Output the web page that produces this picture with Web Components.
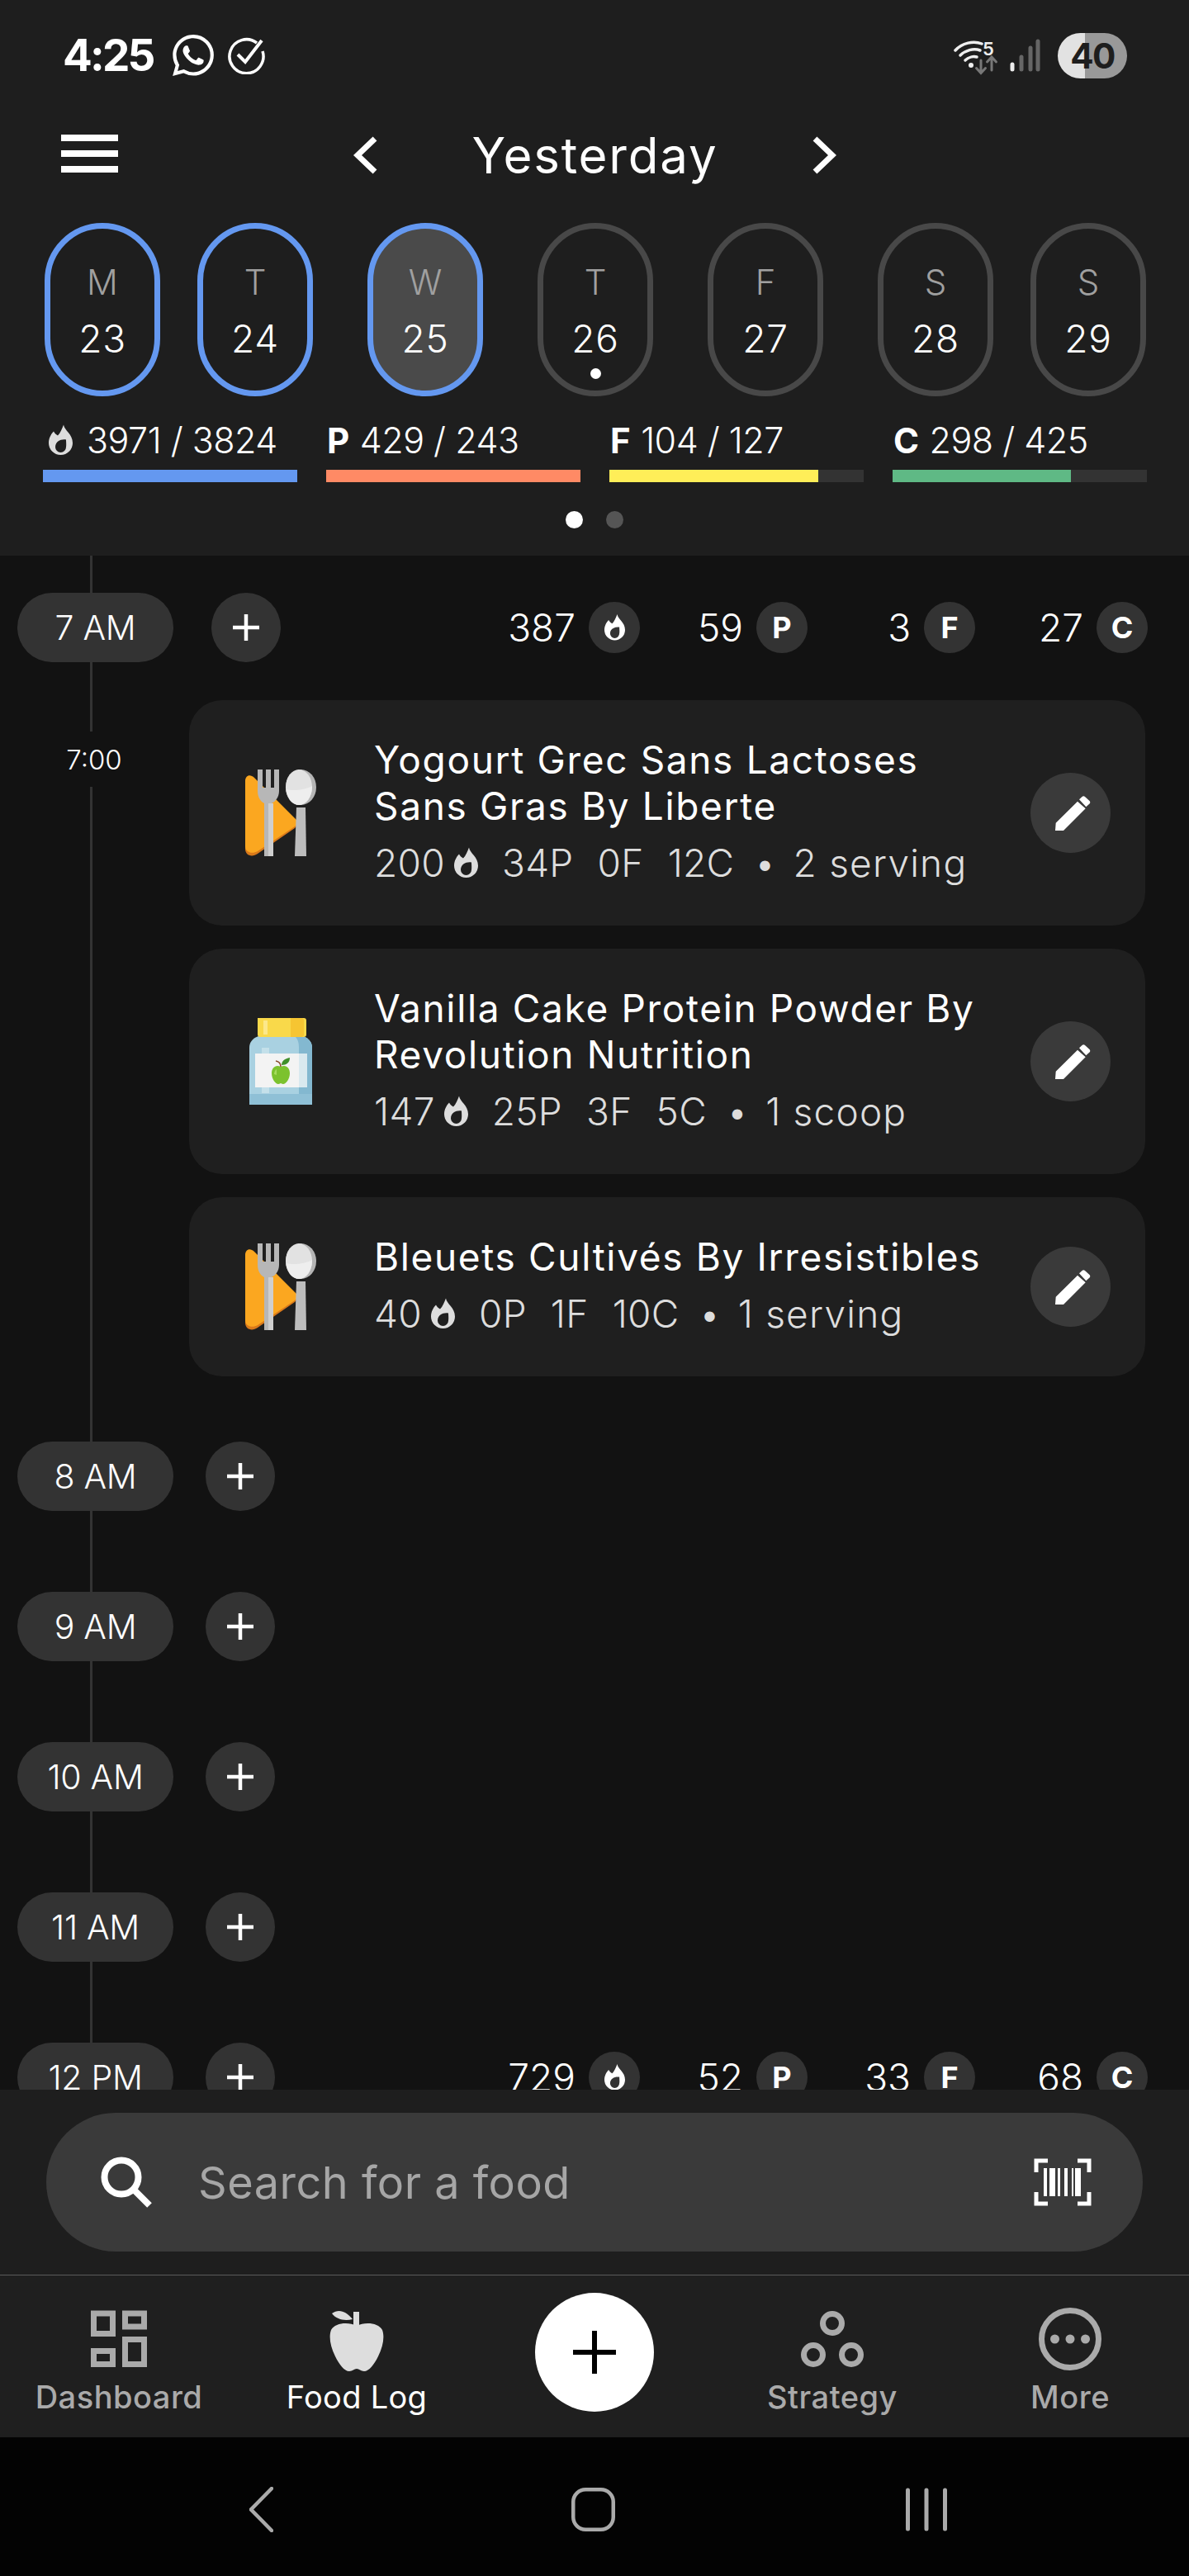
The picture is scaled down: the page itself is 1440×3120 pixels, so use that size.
<!DOCTYPE html>
<html>
<head>
<meta charset="utf-8">
<title>Food Log</title>
<style>
  html, body { margin: 0; background: #000; }
  body { font-family: Inter, "Liberation Sans", sans-serif; color: #fff; width: 1440px; height: 3120px; overflow: hidden; }
  #app { display: flex; flex-direction: column; height: 3120px; }
</style>
</head>
<body>
<div id="app">
  <app-header>
    <status-bar></status-bar>
    <date-nav title="Yesterday"></date-nav>
    <week-strip>
      <day-pill letter="M" day="23" logged></day-pill>
      <day-pill letter="T" day="24" logged></day-pill>
      <day-pill letter="W" day="25" logged selected spaced></day-pill>
      <day-pill letter="T" day="26" today spaced></day-pill>
      <day-pill letter="F" day="27" spaced></day-pill>
      <day-pill letter="S" day="28" spaced></day-pill>
      <day-pill letter="S" day="29"></day-pill>
    </week-strip>
    <macro-summary>
      <macro-bar kind="flame" text="3971 / 3824" color="#6498f0" fill="100"></macro-bar>
      <macro-bar kind="P" text="429 / 243" color="#ff8a65" fill="100"></macro-bar>
      <macro-bar kind="F" text="104 / 127" color="#ffee58" fill="82"></macro-bar>
      <macro-bar kind="C" text="298 / 425" color="#5fb985" fill="70"></macro-bar>
    </macro-summary>
    <page-dots></page-dots>
  </app-header>

  <food-timeline>
    <hour-row label="7 AM" cal="387" p="59" f="3" c="27" first></hour-row>
    <food-entry time="7:00" icon="cutlery" cal="200" p="34" f="0" c="12" serving="2 serving">Yogourt Grec Sans Lactoses<br>Sans Gras By Liberte</food-entry>
    <food-entry icon="bottle" cal="147" p="25" f="3" c="5" serving="1 scoop">Vanilla Cake Protein Powder By<br>Revolution Nutrition</food-entry>
    <food-entry icon="cutlery" cal="40" p="0" f="1" c="10" serving="1 serving">Bleuets Cultivés By Irresistibles</food-entry>
    <hour-row label="8 AM" after-food></hour-row>
    <hour-row label="9 AM"></hour-row>
    <hour-row label="10 AM"></hour-row>
    <hour-row label="11 AM"></hour-row>
    <hour-row label="12 PM" cal="729" p="52" f="33" c="68"></hour-row>
  </food-timeline>

  <search-panel placeholder="Search for a food"></search-panel>

  <bottom-nav>
    <nav-item label="Dashboard" icon="dashboard"></nav-item>
    <nav-item label="Food Log" icon="apple" active></nav-item>
    <add-button></add-button>
    <nav-item label="Strategy" icon="strategy"></nav-item>
    <nav-item label="More" icon="more"></nav-item>
  </bottom-nav>

  <system-bar></system-bar>
</div>

<script>
  const FLAME = `<path fill-rule="evenodd" d="M18 0C19 7 29 11 29 22A14.500 14.500 0 0 1 0 22C0 16 3 11 6 8C7 10 9 12 11 13C14 10 16 5 18 0ZM21 18C15 17 8 20 8 27A6.500 6.500 0 0 0 21 27C21.500 24 21 21 21 18Z"/>`;

  class FlameIcon extends HTMLElement {
    connectedCallback() {
      const w = this.getAttribute("width") || 29;
      const h = this.getAttribute("height") || 38;
      this.attachShadow({ mode: "open" }).innerHTML = `
        <style>:host { display: inline-flex; flex: none; } svg { display: block; fill: currentColor; }</style>
        <svg width="${w}" height="${h}" viewBox="0 0 29 37">${FLAME}</svg>`;
    }
  }

  class AppHeader extends HTMLElement {
    constructor() {
      super();
      this.attachShadow({ mode: "open" }).innerHTML = `
        <style>:host { display: flex; flex-direction: column; flex: none; height: 673px; box-sizing: border-box; background: #1e1e1e; }</style>
        <slot></slot>`;
    }
  }

  class StatusBar extends HTMLElement {
    constructor() {
      super();
      this.attachShadow({ mode: "open" }).innerHTML = `
        <style>
          :host { display: flex; align-items: center; height: 134px; padding: 0 75px 0 76px; box-sizing: border-box; }
          .time { font-size: 53px; font-weight: 700; letter-spacing: -2.800px; width: 133px; }
          svg { display: block; }
          .check { margin-left: 16px; }
          .right { margin-left: auto; display: flex; align-items: center; }
          .bat { margin-left: 21px; width: 84px; height: 55px; border-radius: 28px; color: #1e1e1e;
            background: linear-gradient(90deg, #e2e2e2 0 33px, #999 33px); font-size: 42px; font-weight: 700;
            display: flex; align-items: center; justify-content: center; letter-spacing: -1.500px; }
          .five { font-size: 22px; font-weight: 600; fill: #eee; font-family: Inter, sans-serif; }
        </style>
        <span class="time">4:25</span>
        <svg width="50" height="50" viewBox="0 0 24 24" fill="#fff"><path d="M17.472 14.382c-.297-.149-1.758-.867-2.03-.967-.273-.099-.471-.148-.67.15-.197.297-.767.966-.94 1.164-.173.199-.347.223-.644.075-.297-.15-1.255-.463-2.39-1.475-.883-.788-1.48-1.761-1.653-2.059-.173-.297-.018-.458.13-.606.134-.133.298-.347.446-.52.149-.174.198-.298.298-.497.099-.198.05-.371-.025-.52-.075-.149-.669-1.612-.916-2.207-.242-.579-.487-.5-.669-.51-.173-.008-.371-.01-.57-.01-.198 0-.52.074-.792.372-.272.297-1.04 1.016-1.04 2.479 0 1.462 1.065 2.875 1.213 3.074.149.198 2.096 3.2 5.077 4.487.709.306 1.262.489 1.694.625.712.227 1.36.195 1.871.118.571-.085 1.758-.719 2.006-1.413.248-.694.248-1.289.173-1.413-.074-.124-.272-.198-.57-.347m-5.421 7.403h-.004a9.87 9.87 0 01-5.031-1.378l-.361-.214-3.741.982.998-3.648-.235-.374a9.86 9.86 0 01-1.51-5.26c.001-5.45 4.436-9.884 9.888-9.884 2.64 0 5.122 1.03 6.988 2.898a9.825 9.825 0 012.893 6.994c-.003 5.45-4.437 9.884-9.885 9.884m8.413-18.297A11.815 11.815 0 0012.05 0C5.495 0 .16 5.335.157 11.892c0 2.096.547 4.142 1.588 5.945L.057 24l6.305-1.654a11.882 11.882 0 005.683 1.448h.005c6.554 0 11.89-5.335 11.893-11.893a11.821 11.821 0 00-3.48-8.413z"/></svg>
        <svg class="check" width="46" height="46" viewBox="0 0 46 46" fill="none" stroke="#fff" stroke-width="3.500">
          <path d="M36 8A20.500 20.500 0 1 0 43 18"/>
          <path d="M13 22l9 9L42 5" stroke-width="4"/>
        </svg>
        <div class="right">
          <svg width="54" height="48" viewBox="0 0 54 48" fill="none" stroke-linecap="round">
            <path d="M2 18C10 9 24 6 34 10" stroke="#eee" stroke-width="3.500"/>
            <path d="M8 24C14 18 24 15 32 18" stroke="#eee" stroke-width="3.500"/>
            <path d="M14 30C18 26 24 25 28 26" stroke="#eee" stroke-width="3.500"/>
            <circle cx="21" cy="36" r="3" fill="#eee"/>
            <text class="five" x="35" y="24">5</text>
            <path d="M33 30v15M27.500 39.500l5.500 6 5.500-6" stroke="#777" stroke-width="3"/>
            <path d="M46 42V27M40.500 32l5.500-6 5.500 6" stroke="#777" stroke-width="3"/>
          </svg>
          <svg style="margin-left:14px" width="37" height="40" viewBox="0 0 37 40" stroke-linecap="round" stroke-width="5">
            <path d="M3 37v-6" stroke="#eee"/><path d="M14 37V22" stroke="#666"/><path d="M25 37V11" stroke="#666"/><path d="M34 37V3" stroke="#666"/>
          </svg>
          <div class="bat">40</div>
        </div>`;
    }
  }

  class DateNav extends HTMLElement {
    connectedCallback() {
      this.attachShadow({ mode: "open" }).innerHTML = `
        <style>
          :host { display: flex; align-items: center; height: 108px; padding-left: 74px; }
          svg { display: block; flex: none; }
          .burger { width: 69px; height: 46px; margin-right: 285px; margin-top: -4px;
            display: flex; flex-direction: column; justify-content: space-between; }
          .burger i { display: block; height: 8px; background: #fff; }
          .title { width: 527px; text-align: center; font-size: 60px; line-height: 70px; letter-spacing: 1.800px; }
        </style>
        <div class="burger"><i></i><i></i><i></i></div>
        <svg width="29" height="46" viewBox="0 0 29 46" fill="none" stroke="#fff" stroke-width="7"><path d="M26 3L5 23l21 20"/></svg>
        <span class="title">${this.getAttribute("title")}</span>
        <svg width="29" height="46" viewBox="0 0 29 46" fill="none" stroke="#fff" stroke-width="7"><path d="M3 3l21 20L3 43"/></svg>`;
    }
  }

  class WeekStrip extends HTMLElement {
    constructor() {
      super();
      this.attachShadow({ mode: "open" }).innerHTML = `
        <style>:host { display: flex; gap: 45px; margin-top: 28px; padding-left: 54px; }</style>
        <slot></slot>`;
    }
  }

  class DayPill extends HTMLElement {
    connectedCallback() {
      const logged = this.hasAttribute("logged");
      const selected = this.hasAttribute("selected");
      this.attachShadow({ mode: "open" }).innerHTML = `
        <style>
          :host { display: block; flex: none; margin-left: ${this.hasAttribute("spaced") ? 21 : 0}px; }
          .pill { position: relative; width: 140px; height: 210px; box-sizing: border-box; border-radius: 70px;
            border: 7px solid ${logged ? "#6498f0" : "#484848"}; background: ${selected ? "#4a4a4a" : "transparent"};
            display: flex; flex-direction: column; align-items: center; padding-top: 40px; }
          .letter { font-size: 42px; line-height: 50px; color: #a0a0a0; font-weight: 300; }
          .day { font-size: 46px; line-height: 56px; margin-top: 15px; letter-spacing: .8px; font-weight: 300; }
          .dot { position: absolute; left: 50%; bottom: 14px; width: 13px; height: 13px; margin-left: -6.500px; border-radius: 50%; background: #fff; }
        </style>
        <div class="pill">
          <span class="letter">${this.getAttribute("letter")}</span>
          <span class="day">${this.getAttribute("day")}</span>
          ${this.hasAttribute("today") ? '<span class="dot"></span>' : ""}
        </div>`;
    }
  }

  class MacroSummary extends HTMLElement {
    constructor() {
      super();
      this.attachShadow({ mode: "open" }).innerHTML = `
        <style>:host { display: grid; grid-template-columns: repeat(4, 308px); column-gap: 35px; margin-top: 25px; padding-left: 52px; }</style>
        <slot></slot>`;
    }
  }

  class MacroBar extends HTMLElement {
    connectedCallback() {
      const kind = this.getAttribute("kind");
      const head = kind === "flame"
        ? '<flame-icon style="color:#ddd"></flame-icon>'
        : `<b>${kind}</b>`;
      this.attachShadow({ mode: "open" }).innerHTML = `
        <style>
          :host { display: block; }
          .label { display: flex; align-items: center; gap: ${kind === "flame" ? 17 : 13}px; height: 56px; padding-left: ${kind === "flame" ? 7 : 1}px;
            font-size: 43px; letter-spacing: -.5px; font-weight: 300; white-space: nowrap; }
          b { font-weight: 700; font-size: 42px; }
          .track { height: 15px; margin-top: 8px; background: #333; }
          .fill { height: 100%; }
        </style>
        <div class="label">${head}<span>${this.getAttribute("text")}</span></div>
        <div class="track"><div class="fill" style="width:${this.getAttribute("fill")}%;background:${this.getAttribute("color")}"></div></div>`;
    }
  }

  class PageDots extends HTMLElement {
    constructor() {
      super();
      this.attachShadow({ mode: "open" }).innerHTML = `
        <style>
          :host { display: flex; justify-content: center; gap: 28px; margin-top: 35px; }
          i { display: block; width: 21px; height: 21px; border-radius: 50%; background: #555; }
          i:first-of-type { background: #fff; }
        </style>
        <i></i><i></i>`;
    }
  }

  class FoodTimeline extends HTMLElement {
    constructor() {
      super();
      this.attachShadow({ mode: "open" }).innerHTML = `
        <style>
          :host { display: flex; flex-direction: column; flex: 1; min-height: 0; overflow: hidden; box-sizing: border-box; padding-top: 45px;
            background: linear-gradient(#333, #333) 108.500px 0 / 3px 100% no-repeat #121212; }
        </style>
        <slot></slot>`;
    }
  }

  class HourRow extends HTMLElement {
    connectedCallback() {
      const first = this.hasAttribute("first");
      const groups = this.hasAttribute("cal") ? [
        [this.getAttribute("cal"), "<flame-icon width='25' height='32'></flame-icon>"],
        [this.getAttribute("p"), "P"],
        [this.getAttribute("f"), "F"],
        [this.getAttribute("c"), "C"],
      ].map(([val, mark]) => `<div class="group"><span>${val}</span><span class="badge">${mark}</span></div>`).join("") : "";
      this.attachShadow({ mode: "open" }).innerHTML = `
        <style>
          :host { display: flex; flex: none; align-items: center; height: 84px; padding: 0 50px 0 21px;
            margin-top: ${this.hasAttribute("after-food") ? 79 : first ? 0 : 98}px; margin-bottom: ${first ? 46 : 0}px; }
          .pill { width: 189px; height: 84px; border-radius: 42px; background: #333; display: flex; align-items: center; justify-content: center;
            font-size: 41px; font-weight: 300; letter-spacing: -.3px; }
          .add { width: 84px; height: 84px; border-radius: 50%; background: #333; margin-left: ${first ? 46 : 39}px; display: flex; align-items: center; justify-content: center; }
          svg { display: block; }
          .macros { margin-left: auto; display: flex; }
          .group { width: 203px; display: flex; align-items: center; justify-content: flex-end; gap: 16px; font-size: 46px; font-weight: 300; }
          .group:last-child { width: 209px; }
          .badge { width: 62px; height: 62px; border-radius: 50%; background: #333; display: flex; align-items: center; justify-content: center;
            font-size: 36px; font-weight: 700; }
        </style>
        <span class="pill">${this.getAttribute("label")}</span>
        <span class="add"><svg width="32" height="32" viewBox="0 0 32 32" stroke="#fff" stroke-width="4.500"><path d="M16 0v32M0 16h32"/></svg></span>
        <div class="macros">${groups}</div>`;
    }
  }

  const FOOD_ICONS = {
    cutlery: `<svg width="86" height="105" viewBox="0 0 86 105">
        <path d="M0 16C0 8 6 6 11 11L61 61C64 64 64 68 60 71L15 102C8 107 0 104 0 96Z" fill="#d9791a"/>
        <path d="M0 14C0 7 6 5 11 10L61 60C64 63 64 66 60 69L15 99C8 103 0 100 0 93Z" fill="#fba720"/>
        <path d="M15 0h6v22h4V0h6v22h4V0h6v26c0 8-5 13-9 15v64H23V41c-4-2-8-7-8-15z" fill="#b7b7b7"/>
        <path d="M28 41h6v64h-6z" fill="#cfcfcf"/>
        <path d="M62 46h11l1 59H60z" fill="#bdbdbd"/>
        <ellipse cx="67.500" cy="21.500" rx="18.500" ry="21.500" fill="#b5b5b5"/>
        <ellipse cx="65" cy="21.500" rx="16" ry="21.500" fill="#e2e2e2"/>
        <path d="M50 24c8 2 22 1 31-4 0 13-7 23-16 23-8 0-14-8-15-19z" fill="#eee"/>
      </svg>`,
    bottle: `<svg width="76" height="105" viewBox="0 0 76 105">
        <path d="M11 22h54c8 3 11 8 11 14v69H0V36c0-6 3-11 11-14z" fill="#a9d1e1"/>
        <path d="M55 22h10c8 3 11 8 11 14v69H60V36c0-6-1-10-5-14z" fill="#83b8d0"/>
        <path d="M0 92h76v13H0z" fill="#8fc0d6"/>
        <path d="M15 36h9v55h-9z" fill="#c4e0ea"/>
        <path d="M7 43h63v41H7z" fill="#f3f3f3"/>
        <path d="M60 43h10v41H60z" fill="#d9e9ef"/>
        <path d="M10 0h56a3 3 0 0 1 3 3v17a3 3 0 0 1-3 3H13a3 3 0 0 1-3-3z" fill="#f9d94a"/>
        <path d="M50 0h13a3 3 0 0 1 3 3v17a3 3 0 0 1-3 3H50z" fill="#f6c532"/>
        <path d="M17 3h5v17h-5z" fill="#fce88a"/>
        <path d="M38 59c-6-3-11 1-11 8 0 7 5 13 8 13 2 0 2-1 3-1s1 1 3 1c3 0 8-6 8-13 0-7-5-11-11-8z" fill="#7cc22e"/>
        <path d="M33 62c-2 1-3 4-3 6l3 1z" fill="#a7dc5e"/>
        <path d="M38 59c0-3-1-6-6-7" fill="none" stroke="#8a4a2a" stroke-width="1.500"/>
        <path d="M39 57c0-5 4-8 10-9 0 6-4 9-10 9z" fill="#3f8f2a"/>
      </svg>`,
  };

  class FoodEntry extends HTMLElement {
    connectedCallback() {
      const a = (n) => this.getAttribute(n);
      const time = a("time");
      this.attachShadow({ mode: "open" }).innerHTML = `
        <style>
          :host { display: grid; flex: none; grid-template-columns: 229px 1158px; margin-bottom: 28px; }
          :host(:last-of-type) { margin-bottom: 0; }
          .time { grid-column: 1; justify-self: start; align-self: start; width: 78px; height: 67px; margin: 38px 0 0 75px; background: #121212;
            display: flex; align-items: center; justify-content: center; font-size: 33px; font-weight: 300; }
          .card { grid-column: 2; display: flex; align-items: center; padding: 44px 42px 48px 68px; background: #1f1f1f; border-radius: 40px; }
          .icon { width: 86px; display: flex; justify-content: center; flex: none; margin: 4px 70px 0 0; }
          svg { display: block; }
          .body { flex: 1; min-width: 0; }
          .title { font-size: 46px; line-height: 56px; font-weight: 400; letter-spacing: 1.650px; white-space: nowrap; }
          .meta { display: flex; align-items: center; gap: 29px; margin-top: 13px; height: 56px; color: #ddd; font-size: 46px; font-weight: 300; letter-spacing: .3px; white-space: nowrap; }
          .cal { display: flex; align-items: center; gap: 11px; }
          .sep { margin: 0 -8px 0 -5px; }
          .serving { letter-spacing: 1.200px; }
          .edit { width: 97px; height: 97px; margin-top: 4px; border-radius: 50%; background: #3a3a3a; flex: none; display: flex; align-items: center; justify-content: center; }
        </style>
        ${time ? `<span class="time">${time}</span>` : ""}
        <div class="card">
          <div class="icon">${FOOD_ICONS[a("icon")]}</div>
          <div class="body">
            <div class="title"><slot></slot></div>
            <div class="meta">
              <span class="cal">${a("cal")}<flame-icon></flame-icon></span>
              <span>${a("p")}P</span><span>${a("f")}F</span><span>${a("c")}C</span>
              <span class="sep">•</span><span class="serving">${a("serving")}</span>
            </div>
          </div>
          <span class="edit"><svg width="70" height="70" viewBox="0 0 70 70" fill="#fff"><path d="M16 56L16.700 46.700 43 20.700 52.700 29.300 26 56zM45 18.300L48.500 15C49.500 14 51 14 52 15L57.500 20C58.500 21 58.500 22.500 57.500 23.500L53.300 27.300z"/></svg></span>
        </div>`;
    }
  }

  class SearchPanel extends HTMLElement {
    connectedCallback() {
      this.attachShadow({ mode: "open" }).innerHTML = `
        <style>
          :host { display: block; flex: none; height: 225px; box-sizing: border-box; padding: 28px 56px 0; background: #1e1e1e; border-bottom: 1px solid #5a5a5a; }
          .box { height: 168px; border-radius: 84px; background: #3a3a3a; display: flex; align-items: center; padding: 0 62px 0 66px; }
          svg { display: block; flex: none; }
          .ph { margin-left: 56px; font-size: 54px; color: #a6a6a6; letter-spacing: .5px; font-weight: 400; }
          .scan { margin-left: auto; }
        </style>
        <div class="box">
          <svg width="62" height="62" viewBox="0 0 62 62" fill="none" stroke="#fff"><circle cx="25" cy="25" r="20.500" stroke-width="8"/><path d="M39 39l20 20" stroke-width="8"/></svg>
          <span class="ph">${this.getAttribute("placeholder")}</span>
          <svg class="scan" width="70" height="58" viewBox="0 0 70 58" fill="none" stroke="#fff" stroke-width="5">
            <path d="M17 3H3v14M53 3h14v14M17 55H3V41M53 55h14V41"/>
            <g stroke="none" fill="#fff"><path d="M12 12h4v34h-4zM19 12h7v34h-7zM29 12h3v34h-3zM37 12h4v34h-4zM46 12h2v34h-2zM50 12h7v34h-7z"/></g>
          </svg>
        </div>`;
    }
  }

  class BottomNav extends HTMLElement {
    constructor() {
      super();
      this.attachShadow({ mode: "open" }).innerHTML = `
        <style>:host { display: grid; flex: none; grid-template-columns: repeat(5, 288px); height: 196px; background: #1f1f1f; }</style>
        <slot></slot>`;
    }
  }

  const NAV_ICONS = {
    dashboard: `<svg width="68" height="76" viewBox="0 0 68 76" fill="none" stroke="#aaa" stroke-width="7">
        <rect x="3.500" y="7" width="23" height="24.500"/><rect x="3.500" y="52.500" width="23" height="16"/>
        <rect x="41.500" y="7" width="23" height="16"/><rect x="41.500" y="38.500" width="23" height="30"/>
      </svg>`,
    apple: `<svg width="66" height="78" viewBox="0 0 66 78" fill="#ddd">
        <path d="M29 5h7v18h-7z"/>
        <path d="M3 7c8-6 17-3 25 7-9 2-19 1-25-7z"/>
        <path d="M33 22c10-5 26-4 31 5 3 8 1 20-5 32-5 10-11 18-17 18-4 0-6-3-9-3s-5 3-9 3c-6 0-12-8-17-18C1 47-1 35 2 27c5-9 21-10 31-5z"/>
      </svg>`,
    strategy: `<svg width="76" height="76" viewBox="0 0 76 76" fill="none" stroke="#aaa" stroke-width="7">
        <circle cx="38" cy="19" r="11.500"/><circle cx="15" cy="57" r="11.500"/><circle cx="61" cy="57" r="11.500"/>
      </svg>`,
    more: `<svg width="76" height="76" viewBox="0 0 76 76" fill="#aaa">
        <circle cx="38" cy="38" r="34.500" fill="none" stroke="#aaa" stroke-width="7"/>
        <circle cx="19.500" cy="38" r="5.500"/><circle cx="38" cy="38" r="5.500"/><circle cx="56.500" cy="38" r="5.500"/>
      </svg>`,
  };

  class NavItem extends HTMLElement {
    connectedCallback() {
      const active = this.hasAttribute("active");
      this.attachShadow({ mode: "open" }).innerHTML = `
        <style>
          :host { display: flex; flex-direction: column; align-items: center; padding-top: 39px; box-sizing: border-box; }
          svg { display: block; }
          .icon { height: 76px; }
          .label { margin-top: 9px; font-size: 38px; line-height: 46px; font-weight: ${active ? 400 : 500}; color: ${active ? "#fff" : "#aaa"}; letter-spacing: ${active ? .3 : .5}px; }
        </style>
        <div class="icon">${NAV_ICONS[this.getAttribute("icon")]}</div>
        <span class="label">${this.getAttribute("label")}</span>`;
    }
  }

  class AddButton extends HTMLElement {
    constructor() {
      super();
      this.attachShadow({ mode: "open" }).innerHTML = `
        <style>
          :host { display: flex; justify-content: center; padding-top: 21px; }
          .btn { width: 144px; height: 144px; border-radius: 50%; background: #fff; display: flex; align-items: center; justify-content: center; }
          svg { display: block; }
        </style>
        <span class="btn"><svg width="52" height="52" viewBox="0 0 52 52" stroke="#000" stroke-width="6"><path d="M26 0v52M0 26h52"/></svg></span>`;
    }
  }

  class SystemBar extends HTMLElement {
    constructor() {
      super();
      this.attachShadow({ mode: "open" }).innerHTML = `
        <style>
          :host { display: flex; flex: none; align-items: center; height: 168px; box-sizing: border-box; padding: 6px 0 0 302px; background: #030303; }
          svg { display: block; flex: none; }
          .home { margin-left: 361px; }
          .recent { margin-left: 352px; }
        </style>
        <svg width="29" height="55" viewBox="0 0 29 55" fill="none" stroke="#aaa" stroke-width="4.500" stroke-linecap="round"><path d="M27 2L2 27.500 27 53"/></svg>
        <svg class="home" width="53" height="53" viewBox="0 0 53 53" fill="none" stroke="#aaa" stroke-width="4.500"><rect x="2.250" y="2.250" width="48.500" height="48.500" rx="15"/></svg>
        <svg class="recent" width="50" height="53" viewBox="0 0 50 53" stroke="#aaa" stroke-width="5" stroke-linecap="round"><path d="M2.500 3v47M25 3v47M47.500 3v47"/></svg>`;
    }
  }

  customElements.define("flame-icon", FlameIcon);
  customElements.define("app-header", AppHeader);
  customElements.define("status-bar", StatusBar);
  customElements.define("date-nav", DateNav);
  customElements.define("week-strip", WeekStrip);
  customElements.define("day-pill", DayPill);
  customElements.define("macro-summary", MacroSummary);
  customElements.define("macro-bar", MacroBar);
  customElements.define("page-dots", PageDots);
  customElements.define("food-timeline", FoodTimeline);
  customElements.define("hour-row", HourRow);
  customElements.define("food-entry", FoodEntry);
  customElements.define("search-panel", SearchPanel);
  customElements.define("bottom-nav", BottomNav);
  customElements.define("nav-item", NavItem);
  customElements.define("add-button", AddButton);
  customElements.define("system-bar", SystemBar);
</script>
</body>
</html>
